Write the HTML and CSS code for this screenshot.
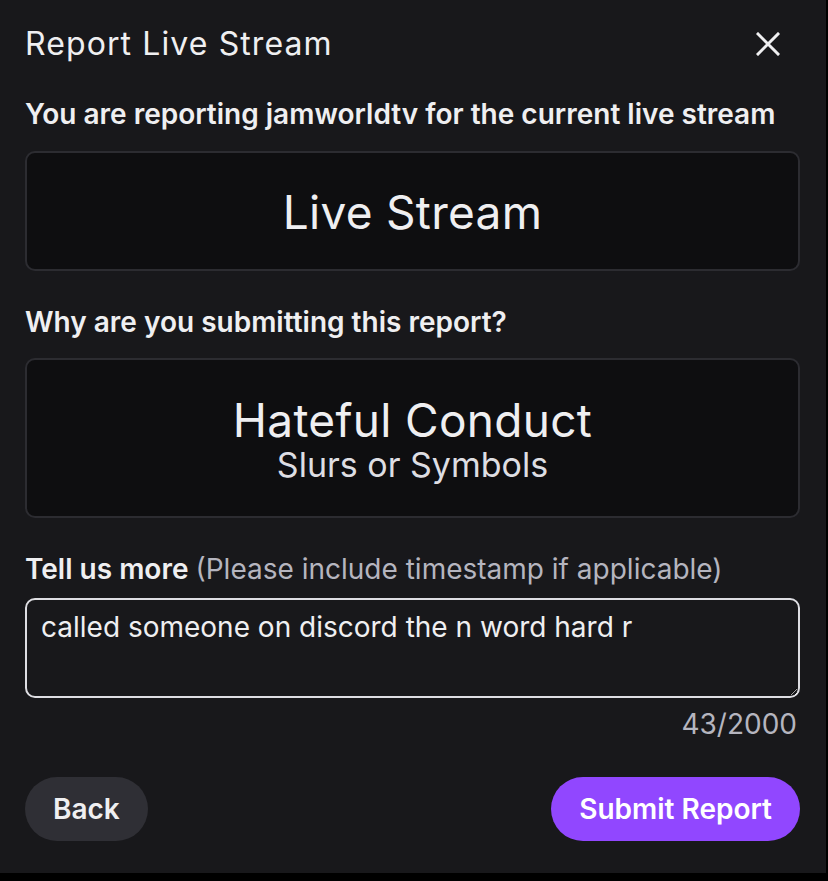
FILE: index.html
```html
<!DOCTYPE html>
<html>
<head>
<meta charset="utf-8">
<link rel="stylesheet" href="styles.css">
</head>
<body>
<div class="modal">
  <div class="header">
    <h1 class="title">Report Live Stream</h1>
    <button class="close" aria-label="Close">
      <svg width="24" height="24" viewBox="0 0 24 24"><path d="M2 2 L22 22 M22 2 L2 22" stroke="#efeff1" stroke-width="3" stroke-linecap="square" fill="none"/></svg>
    </button>
  </div>
  <p class="label label-top">You are reporting jamworldtv for the current live stream</p>
  <div class="choice"><div class="choice-title">Live Stream</div></div>
  <p class="label label-why">Why are you submitting this report?</p>
  <div class="choice choice-tall">
    <div class="choice-title">Hateful Conduct</div>
    <div class="choice-sub">Slurs or Symbols</div>
  </div>
  <p class="label label-more">Tell us more <span class="hint">(Please include timestamp if applicable)</span></p>
  <textarea class="textarea">called someone on discord the n word hard r</textarea>
  <div class="counter">43/2000</div>
  <div class="actions">
    <button class="btn btn-back">Back</button>
    <button class="btn btn-submit">Submit Report</button>
  </div>
</div>
</body>
</html>
```

FILE: styles.css
```css
html, body {
  margin: 0;
  padding: 0;
  background: #000;
}
body {
  font-family: Inter, "Noto Sans", sans-serif;
  color: #efeff1;
}
.modal {
  width: 826px;
  height: 873px;
  box-sizing: border-box;
  background: #18181b;
  padding: 24px 26px 0 25px;
  display: flex;
  flex-direction: column;
}
.header {
  display: flex;
  align-items: center;
  justify-content: space-between;
  height: 40px;
}
.title {
  margin: 0;
  font-weight: 400;
  font-size: 32px;
  line-height: 40px;
  letter-spacing: 1.1px;
  color: #efeff1;
}
.close {
  background: none;
  border: 0;
  padding: 0;
  margin-right: 20px;
  width: 24px;
  height: 24px;
  display: flex;
}
.label {
  margin: 0;
  font-size: 28px;
  font-weight: 600;
  line-height: 34px;
  color: #efeff1;
}
.label-top {
  margin-top: 33px;
}
.choice {
  margin-top: 20px;
  height: 120px;
  box-sizing: border-box;
  border: 2px solid #2c2c31;
  border-radius: 10px;
  background: #0e0e10;
  display: flex;
  flex-direction: column;
  align-items: center;
  justify-content: center;
  padding-top: 2px;
}
.choice-tall {
  height: 160px;
  margin-top: 19px;
  padding-top: 4px;
}
.choice-title {
  font-size: 46px;
  line-height: 50px;
  letter-spacing: 0.3px;
  color: #efeff1;
}
.choice-sub {
  font-size: 34px;
  line-height: 40px;
  color: #dedee3;
}
.label-why {
  margin-top: 34px;
}
.label-more {
  margin-top: 34px;
}
.hint {
  font-weight: 400;
  color: #b5b5bf;
}
.textarea {
  margin-top: 12px;
  height: 100px;
  box-sizing: border-box;
  border: 2px solid #dedee3;
  border-radius: 10px;
  background: #18181b;
  color: #efeff1;
  font-family: Inter, "Noto Sans", sans-serif;
  font-size: 28px;
  line-height: 34px;
  padding: 10px 14px;
  resize: vertical;
  outline: none;
}
.counter {
  margin-top: 9px;
  padding-right: 3px;
  text-align: right;
  font-size: 28px;
  line-height: 34px;
  color: #b5b5bf;
}
.actions {
  margin-top: 36px;
  display: flex;
  justify-content: space-between;
}
.btn {
  height: 64px;
  border: 0;
  border-radius: 32px;
  font-family: Inter, "Noto Sans", sans-serif;
  font-size: 28px;
  font-weight: 600;
  padding: 0 28px;
}
.btn-back {
  background: #2f2f35;
  color: #efeff1;
}
.btn-submit {
  background: #9147ff;
  color: #fff;
}
```
